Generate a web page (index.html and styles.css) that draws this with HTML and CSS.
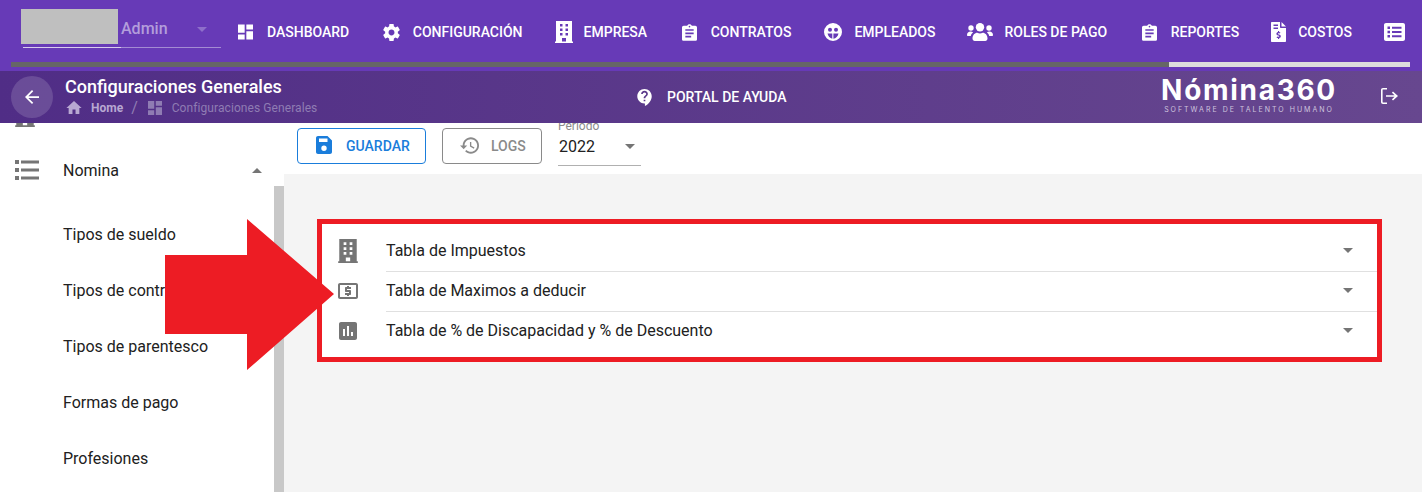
FILE: index.html
```html
<!DOCTYPE html>
<html lang="es">
<head>
<meta charset="utf-8">
<title>Configuraciones Generales</title>
<link rel="stylesheet" href="styles.css">
</head>
<body>
<svg class="sprite" aria-hidden="true">
  <symbol id="i-dash" viewBox="3 3 18 18"><path d="M3 13h8V3H3v10zm0 8h8v-6H3v6zm10 0h8V11h-8v10zm0-18v6h8V3h-8z"/></symbol>
  <symbol id="i-gear" viewBox="2 2 20 20"><path d="M19.43 12.98c.04-.32.07-.64.07-.98s-.03-.66-.07-.98l2.11-1.65c.19-.15.24-.42.12-.64l-2-3.46c-.12-.22-.39-.3-.61-.22l-2.49 1c-.52-.4-1.08-.73-1.69-.98l-.38-2.65C14.46 2.18 14.25 2 14 2h-4c-.25 0-.46.18-.49.42l-.38 2.65c-.61.25-1.17.59-1.69.98l-2.49-1c-.23-.09-.49 0-.61.22l-2 3.46c-.13.22-.07.49.12.64l2.11 1.65c-.04.32-.07.65-.07.98s.03.66.07.98l-2.11 1.65c-.19.15-.24.42-.12.64l2 3.46c.12.22.39.3.61.22l2.49-1c.52.4 1.08.73 1.69.98l.38 2.65c.03.24.24.42.49.42h4c.25 0 .46-.18.49-.42l.38-2.65c.61-.25 1.17-.59 1.69-.98l2.49 1c.23.09.49 0 .61-.22l2-3.46c.12-.22.07-.49-.12-.64l-2.11-1.65zM12 15.5c-1.93 0-3.5-1.57-3.5-3.5s1.57-3.5 3.5-3.5 3.5 1.57 3.5 3.5-1.57 3.5-3.5 3.5z"/></symbol>
  <symbol id="i-building" viewBox="0 0 18 22"><path fill-rule="evenodd" d="M1 0h16v20.500h1V22H0v-1.500h1zM5 3v2.500h2.500V3zm5.500 0v2.500H13V3zM5 7.500V10h2.500V7.500zm5.500 0V10H13V7.500zM5 12v2.500h2.500V12zm5.500 0v2.500H13V12zM7 17v3.500h4V17z"/></symbol>
  <symbol id="i-clip" viewBox="3 1 18 20"><path d="M19 3h-4.180C14.400 1.840 13.300 1 12 1c-1.300 0-2.400.84-2.820 2H5c-1.100 0-2 .9-2 2v14c0 1.100.9 2 2 2h14c1.100 0 2-.9 2-2V5c0-1.100-.9-2-2-2zm-7 0c.55 0 1 .45 1 1s-.45 1-1 1-1-.45-1-1 .45-1 1-1zm2 14H7v-2h7v2zm3-4H7v-2h10v2zm0-4H7V7h10v2z"/></symbol>
  <symbol id="i-face" viewBox="0 0 18 18"><path fill-rule="evenodd" d="M9 0a9 9 0 1 0 0 18A9 9 0 0 0 9 0zM6 4.800a2 2 0 1 1 0 4 2 2 0 0 1 0-4zm6 0a2 2 0 1 1 0 4 2 2 0 0 1 0-4zM3.500 10.500h4.800v5.300c-2.300-.5-4.300-2.700-4.800-5.300zm5.900 0h5.100c-.5 2.700-2.600 4.900-5.100 5.300z"/></symbol>
  <symbol id="i-users" viewBox="0 0 26 18"><circle cx="4" cy="5" r="2.700"/><circle cx="22" cy="5" r="2.700"/><circle cx="13" cy="4.200" r="4.200"/><path d="M0 12c0-2.300 1.600-3.500 3.500-3.500 1.100 0 2 .3 2.600.9C4.800 10.300 4 11.500 3.800 13H1c-.6 0-1-.4-1-1zM26 12c0-2.300-1.600-3.500-3.500-3.500-1.100 0-2 .3-2.600.9 1.300.9 2.100 2.100 2.300 3.600H25c.6 0 1-.4 1-1zM5.500 15.500c0-3.300 2.300-5.700 4.800-5.700.9.500 1.800.7 2.700.7s1.800-.2 2.700-.7c2.500 0 4.800 2.400 4.800 5.700 0 1.500-1 2.500-2.200 2.500H7.700c-1.200 0-2.200-1-2.200-2.500z"/></symbol>
  <symbol id="i-file" viewBox="0 0 15 20"><path fill-rule="evenodd" d="M1 0h8v5c0 .6.400 1 1 1h5v13c0 .6-.4 1-1 1H1c-.6 0-1-.4-1-1V1c0-.6.400-1 1-1zm9.500 0L15 4.500h-4.500zM2.500 2.500V4H7V2.500zm0 3V7H7V5.500zM7 9v1c-1 .2-1.600.9-1.600 1.800 0 1 .8 1.500 1.800 1.800.7.200 1 .4 1 .7 0 .3-.3.500-.7.500-.4 0-.9-.1-1.300-.4l-.7 1c.5.300 1 .5 1.500.6v1h1.200v-1c1-.2 1.600-.9 1.600-1.800 0-1.100-.9-1.600-1.800-1.800-.7-.2-1-.4-1-.7 0-.3.3-.4.700-.4.400 0 .8.100 1.200.3l.5-1c-.4-.2-.8-.4-1.300-.5V9z"/></symbol>
  <symbol id="i-listalt" viewBox="0 0 21 18"><path fill-rule="evenodd" d="M2 0h17c1.100 0 2 .9 2 2v14c0 1.100-.9 2-2 2H2c-1.100 0-2-.9-2-2V2C0 .9.900 0 2 0zm1.500 3.500v2.500H6V3.500zm4.500.3v2h9.500v-2zM3.500 7.800v2.500H6V7.800zm4.500.2v2h9.500V8zM3.500 12v2.500H6V12zm4.500.2v2h9.500v-2z"/></symbol>
  <symbol id="i-help" viewBox="3 2 17 20"><path d="M11.500 2C6.810 2 3 5.810 3 10.500S6.810 19 11.500 19h.5v3c4.860-2.340 8-7 8-11.500C20 5.810 16.190 2 11.500 2zm1 14.500h-2v-2h2v2zm0-3.500h-2c0-3.250 3-3 3-5 0-1.100-.9-2-2-2s-2 .9-2 2h-2c0-2.210 1.790-4 4-4s4 1.790 4 4c0 2.500-3 2.750-3 5z"/></symbol>
  <symbol id="i-back" viewBox="4 4 16 16"><path d="M20 11H7.830l5.590-5.590L12 4l-8 8 8 8 1.410-1.410L7.830 13H20v-2z"/></symbol>
  <symbol id="i-home" viewBox="2 3 20 17"><path d="M10 20v-6h4v6h5v-8h3L12 3 2 12h3v8z"/></symbol>
  <symbol id="i-save" viewBox="0 0 16 18"><path fill-rule="evenodd" d="M2 0h9.500L16 4.500V16c0 1.100-.9 2-2 2H2c-1.100 0-2-.9-2-2V2C0 .9.900 0 2 0zm1 2.500V6h8.500V2.500zM8 9.500a2.700 2.700 0 1 0 0 5.400 2.700 2.700 0 0 0 0-5.400z"/></symbol>
  <symbol id="i-history" viewBox="1 3 21 18"><path d="M13 3c-4.970 0-9 4.030-9 9H1l3.890 3.890.07.14L9 12H6c0-3.870 3.130-7 7-7s7 3.130 7 7-3.130 7-7 7c-1.930 0-3.680-.79-4.940-2.060l-1.420 1.420C8.270 19.990 10.510 21 13 21c4.970 0 9-4.030 9-9s-4.030-9-9-9zm-1 5v5l4.280 2.540.72-1.210-3.500-2.080V8H12z"/></symbol>
  <symbol id="i-logout" viewBox="0 0 17 16"><path d="M6 0v1.600H2c-.3 0-.4.100-.4.400v12c0 .3.100.4.400.4h4V16H2c-1.200 0-2-.8-2-2V2C0 .8.800 0 2 0zM12 3.500l5 4.500-5 4.500-1.100-1.200 2.700-2.500H5V7.200h8.600l-2.700-2.500z"/></symbol>
  <symbol id="i-list" viewBox="0 0 24 20"><path d="M0 0h4v4H0zM6 .5h18v3H6zM0 8h4v4H0zM6 8.500h18v3H6zM0 16h4v4H0zM6 16.500h18v3H6z"/></symbol>
  <symbol id="i-atm" viewBox="2 4 20 16"><path d="M11 17h2v-1h1c.55 0 1-.45 1-1v-3c0-.55-.45-1-1-1h-3v-1h4V8h-2V7h-2v1h-1c-.55 0-1 .45-1 1v3c0 .55.45 1 1 1h3v1H9v2h2v1zm9-13H4c-1.110 0-1.990.89-1.990 2L2 18c0 1.110.89 2 2 2h16c1.110 0 2-.89 2-2V6c0-1.110-.89-2-2-2zm0 14H4V6h16v12z"/></symbol>
  <symbol id="i-chart" viewBox="3 3 18 18"><path d="M19 3H5c-1.100 0-2 .9-2 2v14c0 1.100.9 2 2 2h14c1.100 0 2-.9 2-2V5c0-1.100-.9-2-2-2zM9 17H7v-7h2v7zm4 0h-2V7h2v10zm4 0h-2v-4h2v4z"/></symbol>
</svg>

<header class="topbar">
  <div class="topbar-row">
    <div class="company">
      <div class="company-logo"></div>
      <span class="company-name">Admin</span>
      <span class="caret caret-light"></span>
    </div>
    <nav class="menu">
      <a class="menu-item m-dash"><svg class="ico w15"><use href="#i-dash"/></svg>DASHBOARD</a>
      <a class="menu-item m-conf"><svg class="ico w17"><use href="#i-gear"/></svg>CONFIGURACIÓN</a>
      <a class="menu-item m-emp"><svg class="ico w18 tall"><use href="#i-building"/></svg>EMPRESA</a>
      <a class="menu-item m-con"><svg class="ico w15 tall18"><use href="#i-clip"/></svg>CONTRATOS</a>
      <a class="menu-item m-ple"><svg class="ico w18"><use href="#i-face"/></svg>EMPLEADOS</a>
      <a class="menu-item m-rol"><svg class="ico w26"><use href="#i-users"/></svg>ROLES DE PAGO</a>
      <a class="menu-item m-rep"><svg class="ico w15 tall18"><use href="#i-clip"/></svg>REPORTES</a>
      <a class="menu-item m-cos"><svg class="ico w15 tall20"><use href="#i-file"/></svg>COSTOS</a>
      <a class="menu-item m-more"><svg class="ico w21"><use href="#i-listalt"/></svg></a>
    </nav>
  </div>
  <div class="hscroll"><div class="hscroll-thumb"></div></div>
</header>

<section class="crumbbar">
  <button class="back" type="button"><svg class="ico-back"><use href="#i-back"/></svg></button>
  <div class="crumbs">
    <h1 class="crumb-title">Configuraciones Generales</h1>
    <div class="crumb-path">
      <svg class="crumb-home"><use href="#i-home"/></svg>
      <span class="crumb-link">Home</span>
      <span class="crumb-sep">/</span>
      <svg class="crumb-dash"><use href="#i-dash"/></svg>
      <span class="crumb-current">Configuraciones Generales</span>
    </div>
  </div>
  <a class="help"><svg class="ico-help"><use href="#i-help"/></svg>PORTAL DE AYUDA</a>
  <div class="brand">
    <div class="brand-name">Nómina360</div>
    <div class="brand-sub">SOFTWARE DE TALENTO HUMANO</div>
  </div>
  <svg class="ico-logout"><use href="#i-logout"/></svg>
</section>

<main class="body-row">
  <aside class="sidebar">
    <div class="side-scroll">
      <div class="side-peek"><svg class="side-peek-icon"><use href="#i-building"/></svg></div>
      <div class="side-group">
        <svg class="side-icon"><use href="#i-list"/></svg>
        <span class="side-label">Nomina</span>
        <span class="caret caret-up"></span>
      </div>
      <ul class="side-list">
        <li>Tipos de sueldo</li>
        <li>Tipos de contrato</li>
        <li>Tipos de parentesco</li>
        <li>Formas de pago</li>
        <li>Profesiones</li>
      </ul>
    </div>
    <div class="side-track"></div>
  </aside>
  <div class="page">
    <div class="toolbar">
      <button class="btn btn-save" type="button"><svg class="btn-icon-save"><use href="#i-save"/></svg>GUARDAR</button>
      <button class="btn btn-logs" type="button"><svg class="btn-icon-logs"><use href="#i-history"/></svg>LOGS</button>
      <div class="period">
        <div class="period-label">Periodo</div>
        <div class="period-field"><span>2022</span><span class="caret"></span></div>
      </div>
    </div>
    <div class="content">
      <div class="card">
        <div class="row"><svg class="row-icon row-building"><use href="#i-building"/></svg><div class="row-main"><span>Tabla de Impuestos</span><span class="caret"></span></div></div>
        <div class="row"><svg class="row-icon row-atm"><use href="#i-atm"/></svg><div class="row-main"><span>Tabla de Maximos a deducir</span><span class="caret"></span></div></div>
        <div class="row last"><svg class="row-icon row-chart"><use href="#i-chart"/></svg><div class="row-main"><span>Tabla de % de Discapacidad y % de Descuento</span><span class="caret"></span></div></div>
      </div>
    </div>
  </div>
</main>

<svg class="arrow" viewBox="0 0 170 152" aria-hidden="true"><path d="M0 36h82V0L169 75 82 151V115H0z"/></svg>
</body>
</html>
```
FILE: styles.css
```css
* { box-sizing: border-box; }
html, body { margin: 0; height: 492px; overflow: hidden; }
body { position: relative; background: #fff; font-family: Roboto, "Liberation Sans", sans-serif; color: #212121; }
.sprite { display: none; }
svg { fill: currentColor; display: block; flex: none; }

.caret { width: 0; height: 0; border-left: 5px solid transparent; border-right: 5px solid transparent; border-top: 5px solid #757575; flex: none; }

/* top bar */
.topbar { height: 71px; background: #673ab7; padding: 9px 12px 0 11px; color: #fff; }
.topbar-row { display: flex; height: 53px; }
.company { width: 198px; height: 39px; margin-left: 12px; background: linear-gradient(90deg, #d8ccec 98px, #a48bd3 98px) left bottom / 100% 1px no-repeat; display: flex; align-items: flex-start; margin-right: 17px; flex: none; }
.company-logo { width: 97px; height: 35px; background: #bfbfbf; margin-left: -2px; flex: none; }
.company-name { margin-left: 3px; margin-top: 10px; font-size: 16px; font-weight: 500; line-height: 20px; color: #b39ddb; }
.caret-light { border-top-color: #8e6fca; margin-left: 29px; margin-top: 18px; }
.menu { display: flex; align-items: center; height: 46px; flex: none; }
.menu-item { display: flex; align-items: center; gap: 14px; font-size: 14px; font-weight: 500; color: #fff; white-space: nowrap; flex: none; }
.m-conf { margin-left: 33.5px; gap: 13px; }
.m-emp { margin-left: 32px; gap: 11px; }
.m-con { margin-left: 34.5px; gap: 14px; }
.m-ple { margin-left: 33px; gap: 12px; }
.m-rol { margin-left: 32px; gap: 11px; }
.m-rep { margin-left: 34.5px; gap: 14px; }
.m-cos { margin-left: 32px; gap: 12px; }
.m-more { margin-left: 32px; }
.ico { height: 18px; }
.ico.w15 { width: 15px; height: 16px; }
.ico.w17 { width: 17px; height: 17px; }
.ico.w18 { width: 18px; height: 18px; }
.ico.w18.tall { height: 22px; }
.ico.w26 { width: 26px; height: 18px; }
.ico.w21 { width: 21px; height: 18px; }
.ico.tall18 { height: 17px; }
.ico.tall20 { height: 20px; }
.hscroll { height: 5px; background: #ddd; }
.hscroll-thumb { width: 1158px; height: 5px; background: #666; }

/* breadcrumb bar */
.crumbbar { height: 52px; display: flex; align-items: center; padding: 0 24px 0 11px; color: #fff; background: linear-gradient(90deg, #502d86, #67478f); position: relative; z-index: 2; }
.back { width: 42px; height: 42px; border: 0; border-radius: 50%; background: rgba(255,255,255,.15); color: #fff; display: flex; align-items: center; justify-content: center; padding: 0; flex: none; }
.ico-back { width: 14px; height: 14px; }
.crumbs { margin-left: 12px; width: 572px; flex: none; padding-bottom: 3px; }
.crumb-title { margin: 0; font-size: 18px; font-weight: 500; line-height: 22px; }
.crumb-path { display: flex; align-items: center; margin-top: 2px; font-size: 12px; height: 16px; color: #b8a8d2; }
.crumb-home { width: 16px; height: 13px; margin-left: 1px; }
.crumb-link { margin-left: 9px; font-weight: 700; }
.crumb-sep { margin-left: 8px; font-size: 16px; color: #8f7cb3; }
.crumb-dash { width: 14px; height: 14px; margin-left: 10px; color: #8f7cb3; }
.crumb-current { margin-left: 10px; color: #8f7cb3; letter-spacing: .08px; }
.help { display: flex; align-items: center; gap: 15px; font-size: 14px; font-weight: 500; width: 523px; flex: none; }
.ico-help { width: 15px; height: 17px; }
.brand { width: 178px; flex: none; text-align: center; }
.brand-name { font-family: Inter, "Open Sans", sans-serif; font-size: 28px; font-weight: 700; line-height: 26px; letter-spacing: 1.7px; white-space: nowrap; margin-top: -4px; }
.brand-sub { font-family: Inter, "Open Sans", sans-serif; font-size: 7px; line-height: 9px; letter-spacing: 2px; color: #cfc4de; white-space: nowrap; margin-top: 2px; }
.ico-logout { width: 17px; height: 16px; margin-left: 43px; margin-bottom: 2px; }

/* body */
.body-row { display: flex; height: 369px; }
.sidebar { width: 284px; display: flex; flex: none; overflow: hidden; }
.side-scroll { width: 274px; flex: none; }
.side-track { width: 10px; background: #c8c8c8; margin-top: 63px; flex: none; }
.side-peek { height: 4px; overflow: hidden; display: flex; align-items: flex-end; padding-left: 15px; color: #757575; }
.side-peek-icon { width: 20px; height: 24px; }
.side-group { display: flex; align-items: center; height: 56px; margin-top: 15px; padding-left: 15px; }
.side-icon { width: 24px; height: 20px; color: #757575; }
.side-label { margin-left: 24px; font-size: 16px; flex: 1; }
.caret-up { border-top: 0; border-bottom: 5px solid #757575; margin-right: 12px; }
.side-list { list-style: none; margin: 9px 0 0; padding: 0; }
.side-list li { height: 56px; line-height: 56px; padding-left: 63px; font-size: 16px; }

.page { flex: 1; min-width: 0; display: flex; flex-direction: column; }
.toolbar { height: 51px; display: flex; align-items: flex-start; padding: 5px 0 0 13px; flex: none; background: #fff; }
.btn { height: 36px; border-radius: 4px; background: #fff; font-family: inherit; font-size: 14px; font-weight: 500; display: flex; align-items: center; padding: 0; }
.btn-save { width: 129px; border: 1px solid #1a7ddb; color: #1a7ddb; padding-left: 18px; gap: 14px; }
.btn-icon-save { width: 16px; height: 18px; margin-bottom: 2px; }
.btn-logs { width: 100px; margin-left: 16px; border: 1px solid #8a8a8a; color: #8a8a8a; padding-left: 17px; gap: 12px; }
.btn-icon-logs { width: 19px; height: 17px; margin-bottom: 2px; }
.period { width: 83px; margin-left: 16px; margin-top: -5px; }
.period-label { height: 10px; overflow: hidden; font-size: 12px; line-height: 7px; color: #8a8a8a; }
.period-field { display: flex; align-items: center; justify-content: space-between; height: 33px; border-bottom: 1px solid #b0b0b0; font-size: 16px; padding: 0 6px 6px 1px; }
.content { flex: 1; background: #f4f4f4; padding: 45px 40px 0 33px; }
.card { height: 143px; background: #fff; border: 5px solid #ed1c24; padding: 8px 0 0 16px; }
.row { display: flex; align-items: center; height: 40px; }
.row-icon { width: 20px; color: #757575; flex: none; }
.row-building { height: 24px; margin-top: -2px; }
.row-atm { height: 16px; margin-top: -2px; }
.row-chart { height: 18px; width: 18px; margin: -2px 1px 0; }
.row-main { margin-left: 28px; flex: 1; height: 40px; display: flex; align-items: center; justify-content: space-between; padding: 0 24px 2px 0; border-bottom: 1px solid #e0e0e0; font-size: 16px; }
.row.last .row-main { border-bottom-color: transparent; }
.arrow { position: absolute; left: 165px; top: 219px; width: 170px; height: 152px; fill: #ed1c24; z-index: 3; }
```
